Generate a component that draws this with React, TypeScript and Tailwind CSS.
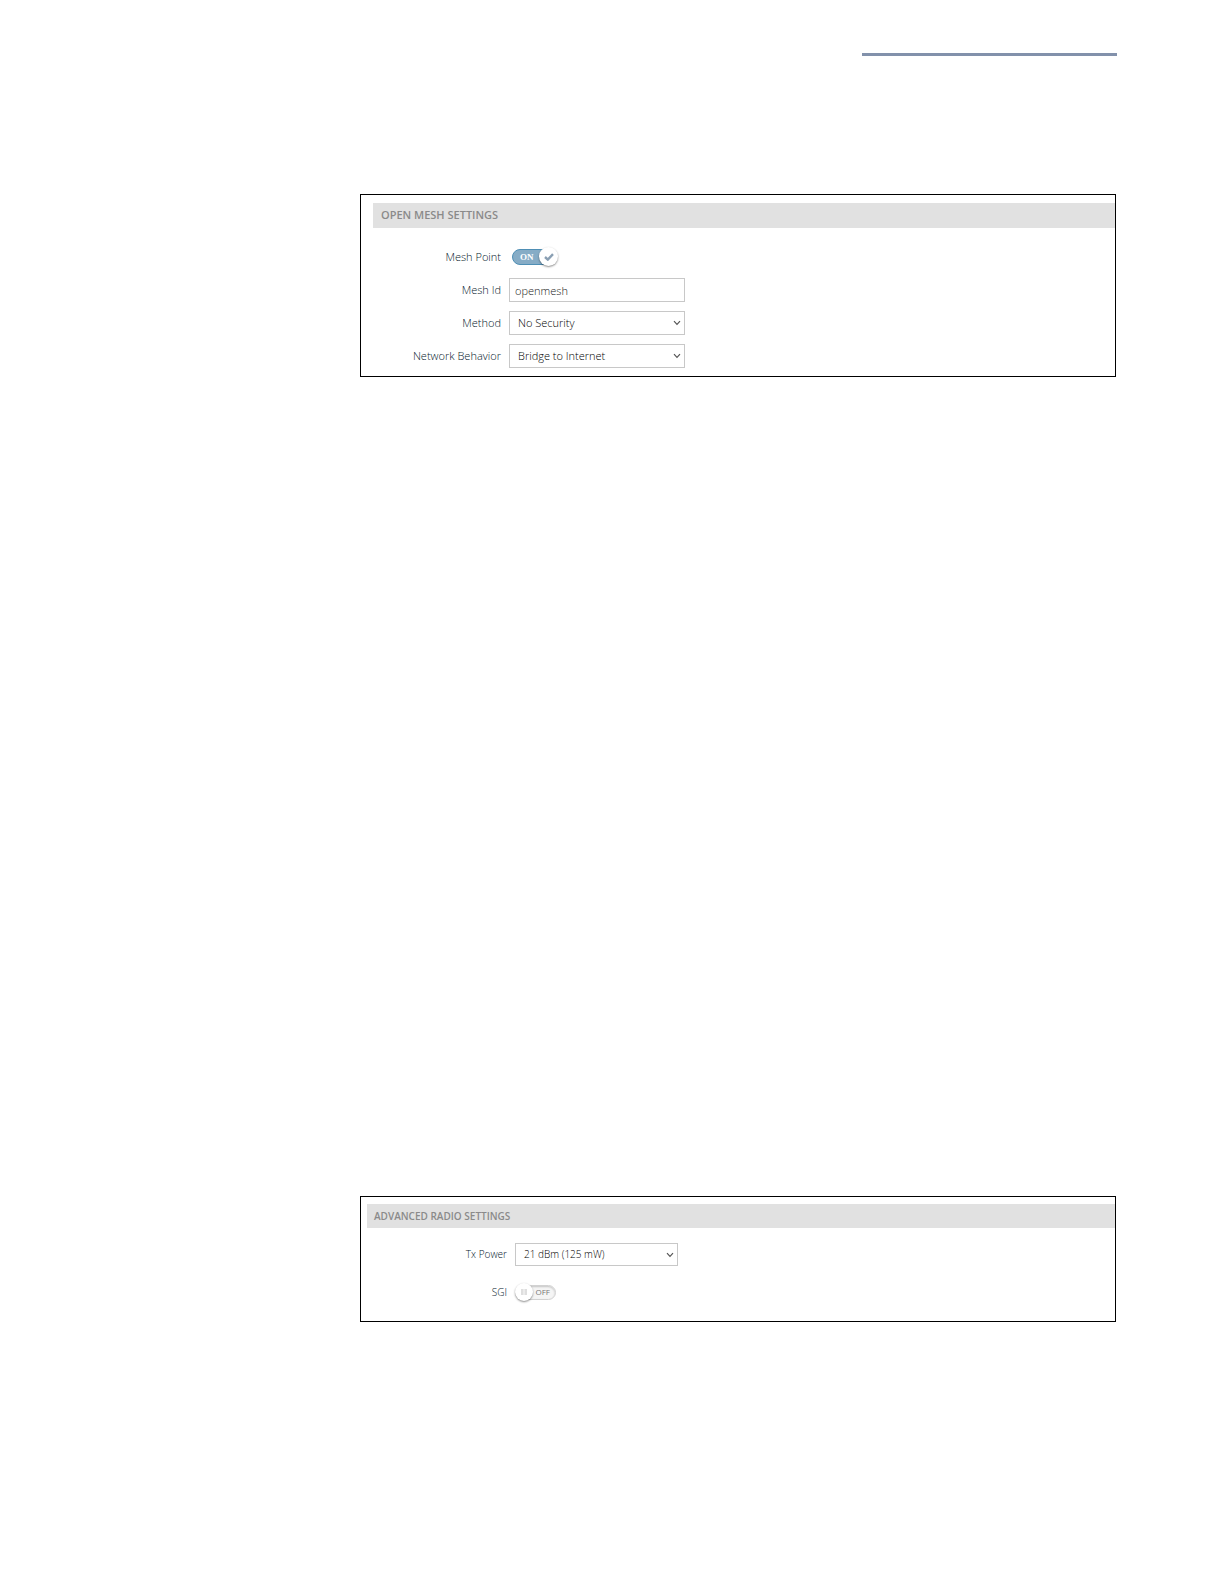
import React from 'react'
import clsx from 'clsx'

interface SelectProps {
  id: string
  options: string[]
  className?: string
}

const Select: React.FC<SelectProps> = ({ id, options, className }) => (
  <div className={clsx('relative', className)}>
    <select
      id={id}
      className="block w-full h-full appearance-none rounded-none border border-[#c8c8c8] bg-white pl-2 pr-5 text-black"
    >
      {options.map((o) => (
        <option key={o}>{o}</option>
      ))}
    </select>
    <svg
      viewBox="0 0 8 6"
      className="pointer-events-none absolute right-1 top-1/2 w-2 h-1.5 -translate-y-1/2"
      fill="none"
      stroke="#555"
      strokeWidth="1.2"
    >
      <path d="M1 1.2 4 4.3 7 1.2" />
    </svg>
  </div>
)

interface ToggleProps {
  id: string
  defaultOn?: boolean
}

const Toggle: React.FC<ToggleProps> = ({ id, defaultOn = false }) => {
  const [on, setOn] = React.useState(defaultOn)

  return (
    <span className={clsx('relative flex items-center', on ? 'ml-[3px] w-[46px] h-5' : 'w-[41px] h-[18px]')}>
      <input
        id={id}
        type="checkbox"
        role="switch"
        checked={on}
        onChange={(e) => setOn(e.target.checked)}
        className="absolute inset-0 z-10 m-0 w-full h-full cursor-pointer opacity-0"
      />
      {on ? (
        <span className="flex items-center w-10 h-4 rounded-full border border-[#4f8fb5] bg-[#86acc6] pl-[7px] font-['Liberation_Serif',serif] text-[9px] leading-none font-bold text-white">
          ON
        </span>
      ) : (
        <span className="flex items-center justify-end w-full h-[15px] rounded-full border border-[#d2d2d2] bg-[#f5f5f5] pr-[5px] text-[8px] leading-none font-normal text-[#777] shadow-[inset_0_1px_2px_rgba(0,0,0,0.2)]">
          OFF
        </span>
      )}
      <span
        className={clsx(
          'absolute top-0 flex items-center justify-center rounded-full bg-white shadow-[0_1px_2px_rgba(0,0,0,0.45)]',
          on ? 'right-0 size-[19px]' : 'left-0 size-[18px]'
        )}
      >
        {on ? (
          <svg viewBox="0 0 10 8" className="w-2.5 h-2" fill="none" stroke="#8a9fb3" strokeWidth="2.4">
            <path d="M1 4 3.8 6.6 9 1.2" />
          </svg>
        ) : (
          <svg viewBox="0 0 6 6" className="size-1.5" fill="#dedede">
            <path d="M0 0h2.6v6H0zM3.4 0H6v6H3.4z" />
          </svg>
        )}
      </span>
    </span>
  )
}

const App: React.FC = () => {
  return (
    <main className="flex flex-col min-h-screen bg-white pt-[53px] pb-16 pl-[360px] pr-[108px] font-['Open_Sans',sans-serif]">
      <div className="self-end -mr-px w-[255px] h-[3px] bg-[#8291ab]" />

      <section className="mt-[138px] border border-black py-2 text-[11px] font-light">
        <h2 className="flex items-center ml-3 h-[25px] bg-[#e1e1e1] pl-2 font-semibold text-[#8a8a8a]">
          OPEN MESH SETTINGS
        </h2>
        <div className="mt-[17px] grid grid-cols-[140px_1fr] gap-x-2 gap-y-[9px] items-center">
          <label htmlFor="mesh-point" className="text-right text-[#06202c]">Mesh Point</label>
          <div className="flex items-center h-6">
            <Toggle id="mesh-point" defaultOn />
          </div>
          <label htmlFor="mesh-id" className="text-right text-[#06202c]">Mesh Id</label>
          <input
            id="mesh-id"
            type="text"
            defaultValue="openmesh"
            className="w-44 h-6 border border-[#c8c8c8] bg-white px-[5px] text-[#222]"
          />
          <label htmlFor="method" className="text-right text-[#06202c]">Method</label>
          <Select id="method" options={['No Security']} className="w-44 h-6" />
          <label htmlFor="behavior" className="text-right text-[#06202c]">Network Behavior</label>
          <Select id="behavior" options={['Bridge to Internet']} className="w-44 h-6" />
        </div>
      </section>

      <section className="mt-[819px] border border-black pt-[7px] pb-[17px] text-[10px] font-light">
        <h2 className="flex items-center ml-1.5 h-6 bg-[#e1e1e1] pl-[7px] font-semibold text-[#8a8a8a]">
          ADVANCED RADIO SETTINGS
        </h2>
        <div className="mt-[15px] grid grid-cols-[146px_1fr] gap-x-2 gap-y-3.5 items-center">
          <label htmlFor="tx-power" className="text-right text-[#06202c]">Tx Power</label>
          <Select id="tx-power" options={['21 dBm (125 mW)']} className="w-[163px] h-[23px]" />
          <label htmlFor="sgi" className="text-right text-[#06202c]">SGI</label>
          <div className="flex items-center h-6">
            <Toggle id="sgi" />
          </div>
        </div>
      </section>
    </main>
  )
}

export default App
